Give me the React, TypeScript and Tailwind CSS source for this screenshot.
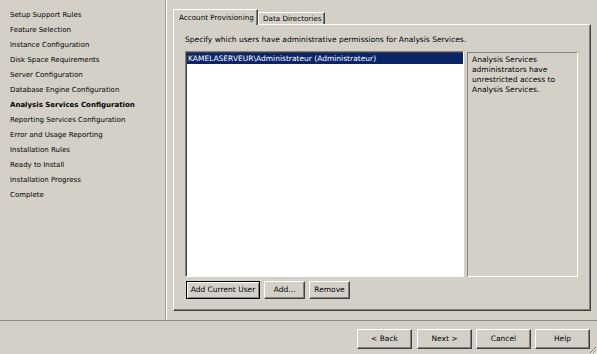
const steps = [
    "Setup Support Rules",
    "Feature Selection",
    "Instance Configuration",
    "Disk Space Requirements",
    "Server Configuration",
    "Database Engine Configuration",
    "Analysis Services Configuration",
    "Reporting Services Configuration",
    "Error and Usage Reporting",
    "Installation Rules",
    "Ready to Install",
    "Installation Progress",
    "Complete"
];

const current = "Analysis Services Configuration";

export default function App() {
    return (
        <div className="relative h-[354px] w-[597px] overflow-hidden bg-[#d4d0c8] font-['DejaVu_Sans',Verdana,sans-serif] text-[7.5px] text-black">
            <div className="flex h-[320px]">
                <nav className="w-[166px] border-r border-[#a09c94] pl-[10px] pt-[8px] text-[7px] shadow-[1px_0_0_#ffffff]">
                    {steps.map((s) => (
                        <div
                            key={s}
                            className={s === current ? "h-[15px] leading-[15px] font-bold" : "h-[15px] leading-[15px]"}
                        >
                            {s}
                        </div>
                    ))}
                </nav>

                <section className="flex-1 pl-[7px] pt-[9px]">
                    <div className="relative z-10 flex h-[15px] items-end whitespace-nowrap text-[7.2px]">
                        <div className="mb-[-1px] h-[16px] w-[85px] border-l border-t border-r border-white border-r-[#404040] bg-[#d4d0c8] pl-[5px] pt-[2px] leading-[12px] shadow-[inset_-1px_0_0_#808080]">
                            Account Provisioning
                        </div>
                        <div className="h-[12px] w-[67px] border-l border-t border-r border-white border-r-[#404040] pl-[4px] leading-[11px] shadow-[inset_-1px_0_0_#808080]">
                            Data Directories
                        </div>
                    </div>

                    <div className="h-[287px] w-[418px] border border-white border-b-[#404040] border-r-[#404040] pl-[11px] pt-[9px] shadow-[inset_-1px_-1px_0_#808080]">
                        <p className="h-[12px] whitespace-nowrap leading-[12px]">
                            Specify which users have administrative permissions for Analysis Services.
                        </p>
                        <div className="mt-[5px] flex">
                            <div className="h-[226px] w-[279px] border border-[#808080] border-b-white border-r-white bg-white shadow-[inset_1px_1px_0_#404040]">
                                <div className="ml-[1px] mt-[1px] h-[11px] whitespace-nowrap bg-[#0a246a] pl-[1px] leading-[11px] text-white">
                                    KAMELASERVEUR\Administrateur (Administrateur)
                                </div>
                            </div>
                            <div className="ml-[3px] mt-[1px] h-[225px] w-[111px] whitespace-nowrap border border-[#808080] border-b-white border-r-white pl-[4px] pt-[2px] leading-[10px]">
                                <div>Analysis Services</div>
                                <div>administrators have</div>
                                <div>unrestricted access to</div>
                                <div>Analysis Services.</div>
                            </div>
                        </div>
                        <div className="ml-[1px] mt-[4px] flex gap-[4px]">
                            <Button className="w-[74px]" primary>
                                Add Current User
                            </Button>
                            <Button className="w-[41px]">Add...</Button>
                            <Button className="w-[41px]">Remove</Button>
                        </div>
                    </div>
                </section>
            </div>

            <footer className="flex justify-end gap-[4px] border-t border-[#8c8a84] pr-[7px] pt-[8px]">
                <Button className="h-[20px] w-[55px]">&lt; Back</Button>
                <Button className="ml-[1px] h-[20px] w-[55px]">Next &gt;</Button>
                <Button className="h-[20px] w-[55px]">Cancel</Button>
                <Button className="h-[20px] w-[55px]">Help</Button>
            </footer>

            <svg className="absolute bottom-0 right-0" width="10" height="10" viewBox="0 0 10 10">
                <path d="M9 3 L3 9 M9 6 L6 9" stroke="#808080" strokeWidth="1" />
                <path d="M10 4 L4 10 M10 7 L7 10" stroke="#ffffff" strokeWidth="1" />
            </svg>
        </div>
    );
}

function Button({
    className,
    primary,
    children
}: {
    className?: string;
    primary?: boolean;
    children: React.ReactNode;
}) {
    return (
        <div
            className={
                (primary
                    ? "border border-black shadow-[inset_1px_1px_0_#ffffff,inset_-1px_-1px_0_#808080] "
                    : "border border-white border-b-[#404040] border-r-[#404040] shadow-[inset_-1px_-1px_0_#808080] ") +
                "flex h-[18px] items-center justify-center whitespace-nowrap bg-[#d4d0c8] " +
                (className ?? "")
            }
        >
            {children}
        </div>
    );
}
